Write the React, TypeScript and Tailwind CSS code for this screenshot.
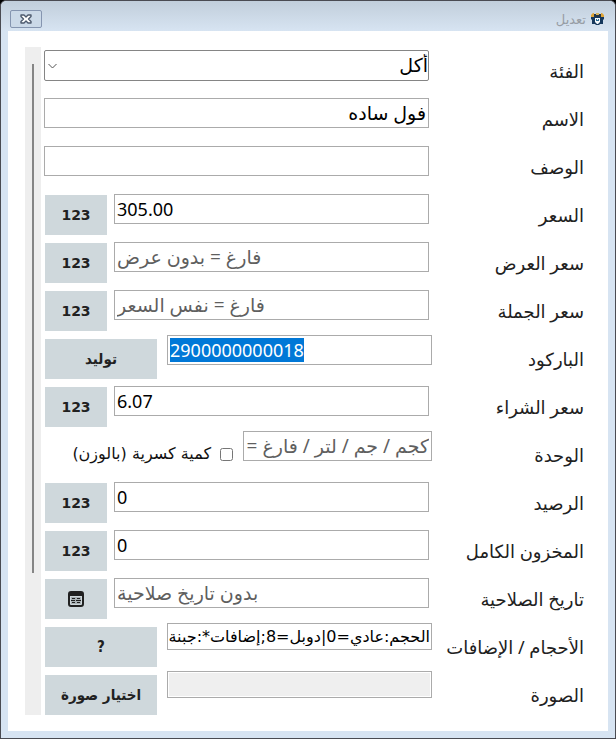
import { useEffect, useRef, useState } from "react";
import type { ReactNode } from "react";

const fieldClass =
  "block w-full min-w-0 flex-1 border border-[#ababab] bg-white px-[2px] leading-[23px] text-black outline-none placeholder:text-[#5f5f5f] placeholder:opacity-100 selection:bg-[#0078d7] selection:text-white";
const buttonClass =
  "mt-1 flex h-10 shrink-0 items-center justify-center bg-[#cfd8dc] font-bold text-[#212121] hover:bg-[#c2cdd2]";
const wideButtonClass = `${buttonClass} w-28 font-['DejaVu_Sans_Condensed','DejaVu_Sans',sans-serif] text-[15px]`;

interface RowProps {
  id: string;
  label: string;
  variant?: "plain" | "button" | "wide";
  children: ReactNode;
}

const rowClasses = {
  plain: "flex min-w-0 flex-1 items-start ps-[3px]",
  button: "flex min-w-0 flex-1 items-start gap-[7px] ps-[3px] pe-px",
  wide: "flex min-w-0 flex-1 items-start gap-[10px] pe-px",
};

function Row({ id, label, variant = "plain", children }: RowProps) {
  return (
    <div className="flex h-12 items-start">
      <label htmlFor={id} className="w-[152px] shrink-0 pt-3 text-lg leading-6 whitespace-nowrap text-[#212121]">
        {label}
      </label>
      <div className={rowClasses[variant]}>{children}</div>
    </div>
  );
}

interface NumberRowProps {
  id: string;
  label: string;
  value?: string;
  placeholder?: string;
}

function NumberRow({ id, label, value, placeholder }: NumberRowProps) {
  return (
    <Row id={id} label={label} variant="button">
      <input
        id={id}
        dir="ltr"
        defaultValue={value}
        placeholder={placeholder}
        className={`${fieldClass} mt-[3px] h-[30px] text-lg placeholder:text-[19px]`}
      />
      <button type="button" className={`${buttonClass} w-[62px] font-['DejaVu_Sans',sans-serif] text-sm`}>
        123
      </button>
    </Row>
  );
}

function AppIcon() {
  return (
    <svg width="13" height="12" viewBox="0 0 13 12">
      <path d="M1 1h11v3H1z" fill="#24364a" />
      <path d="M0 2 2 0h1v4H0zM10 0h1l2 2v2h-3z" fill="#e0a63a" />
      <path d="M5 0h3v2H5z" fill="#d9b45c" />
      <path d="M0 4h13v2l-1 1v4H9l-1 1H5l-1-1H1V7L0 6z" fill="#16385c" />
      <path d="M4 5h5v4l-2 2H6L4 9z" fill="#f4f8fa" />
      <path d="M5 6h3v2H5z" fill="#2b6b94" />
      <path d="M6 6h1v1H6z" fill="#f4f8fa" />
    </svg>
  );
}

function CloseIcon() {
  return (
    <svg width="12" height="10" viewBox="0 0 12 10">
      <path
        d="M1 1h3l2 2 2-2h3v1.500L8.500 5 11 7.500V9H8L6 7 4 9H1V7.500L3.500 5 1 2.500z"
        fill="#fff"
        stroke="#4d5a6e"
        strokeWidth="1.400"
        strokeLinejoin="round"
      />
    </svg>
  );
}

function CalendarIcon() {
  return (
    <svg width="16" height="16" viewBox="0 0 16 16">
      <rect x="1" y="1" width="14" height="14" rx="2" fill="#cfd8dc" stroke="#212121" strokeWidth="2" />
      <path d="M1 2h14v3H1z" fill="#212121" />
      <path d="M3 6h10v7H3z" fill="#a9b1b4" />
      <path d="M4 7h3v1H4zM9 7h3v1H9zM3 9h4v1H3zM8 9h5v1H8zM4 11h3v1H4zM9 11h3v1H9z" fill="#212121" />
    </svg>
  );
}

export default function App() {
  const barcodeRef = useRef<HTMLInputElement>(null);
  const [fractional, setFractional] = useState(false);

  useEffect(() => {
    barcodeRef.current?.focus();
    barcodeRef.current?.select();
  }, []);

  return (
    <div dir="rtl" className="min-h-screen bg-black font-['Noto_Sans','DejaVu_Sans',sans-serif]">
      <div className="flex min-h-screen flex-col rounded-t-md border border-[#4a4b52] bg-[#d7e4f2] px-[7px] pb-[7px]">
        {/* Title bar */}
        <header className="-mx-[7px] flex h-[30px] shrink-0 items-center justify-between rounded-t-md bg-linear-to-b from-[#c1cedb] to-[#d7e4f2] ps-[11px] pe-[9px] pt-[6px]">
          <div className="flex items-center gap-[5px]">
            <AppIcon />
            <h1 className="text-[13px] leading-4 text-[#979da5]">تعديل</h1>
          </div>
          <button
            type="button"
            aria-label="إغلاق"
            className="flex h-[18px] w-8 items-center justify-center rounded-[2px] border border-[#8595b0] bg-[#cbd9e8]"
          >
            <CloseIcon />
          </button>
        </header>

        <main className="flex flex-1 items-start bg-white ps-6 pe-[17px] pt-4 pb-3">
          <form className="min-w-0 flex-1" onSubmit={(e) => e.preventDefault()}>
            <Row id="category" label="الفئة">
              <div className="relative mt-[3px] min-w-0 flex-1">
                <select
                  id="category"
                  className="block h-[31px] w-full appearance-none rounded-[2px] border border-[#858585] bg-white pe-5 text-[19px] leading-[23px] text-black outline-none"
                >
                  <option>أكل</option>
                </select>
                <svg className="pointer-events-none absolute top-3 left-1" width="9" height="8" viewBox="0 0 9 8">
                  <path d="m.5 2 4 4 4-4" fill="none" stroke="#555" />
                </svg>
              </div>
            </Row>
            <Row id="name" label="الاسم">
              <input id="name" defaultValue="فول ساده" className={`${fieldClass} mt-[3px] h-[30px] text-[19px]`} />
            </Row>
            <Row id="description" label="الوصف">
              <input id="description" className={`${fieldClass} mt-[3px] h-[30px] text-[19px]`} />
            </Row>
            <NumberRow id="price" label="السعر" value="305.00" />
            <NumberRow id="offer" label="سعر العرض" placeholder="فارغ = بدون عرض" />
            <NumberRow id="wholesale" label="سعر الجملة" placeholder="فارغ = نفس السعر" />
            <Row id="barcode" label="الباركود" variant="wide">
              <input
                id="barcode"
                ref={barcodeRef}
                dir="ltr"
                defaultValue="2900000000018"
                className={`${fieldClass} h-[30px] text-lg`}
              />
              <button type="button" className={wideButtonClass}>
                توليد
              </button>
            </Row>
            <NumberRow id="cost" label="سعر الشراء" value="6.07" />
            <Row id="unit" label="الوحدة" variant="wide">
              <input id="unit" placeholder="كجم / جم / لتر / فارغ =" className={`${fieldClass} h-[30px] text-[19px]`} />
              <div className="flex w-[188px] shrink-0 items-center gap-[9px] pt-[13px]">
                <input
                  id="fractional"
                  type="checkbox"
                  checked={fractional}
                  onChange={(e) => setFractional(e.target.checked)}
                  className="size-[13px] shrink-0"
                />
                <label
                  htmlFor="fractional"
                  className="font-['DejaVu_Sans',sans-serif] text-base leading-5 whitespace-nowrap text-[#111]"
                >
                  كمية كسرية (بالوزن)
                </label>
              </div>
            </Row>
            <NumberRow id="stock" label="الرصيد" value="0" />
            <NumberRow id="full-stock" label="المخزون الكامل" value="0" />
            <Row id="expiry" label="تاريخ الصلاحية" variant="button">
              <input
                id="expiry"
                dir="ltr"
                placeholder="بدون تاريخ صلاحية"
                className={`${fieldClass} mt-[3px] h-[30px] text-[19px]`}
              />
              <button type="button" aria-label="تاريخ الصلاحية" className={`${buttonClass} w-[62px]`}>
                <CalendarIcon />
              </button>
            </Row>
            <Row id="options" label="الأحجام / الإضافات" variant="wide">
              <input
                id="options"
                defaultValue="الحجم:عادي=0|دوبل=8;إضافات*:جبنة"
                className="block h-[27px] w-full min-w-0 flex-1 border border-[#ababab] bg-white px-px font-['DejaVu_Sans',sans-serif] text-base leading-5 text-black outline-none"
              />
              <button type="button" className={wideButtonClass}>
                ?
              </button>
            </Row>
            <Row id="image" label="الصورة" variant="wide">
              <input
                id="image"
                readOnly
                className="block h-[27px] w-full min-w-0 flex-1 border border-[#ababab] bg-[#efefef] px-[2px] text-base outline-none ring-1 ring-white ring-inset"
              />
              <button type="button" className={wideButtonClass}>
                اختيار صورة
              </button>
            </Row>
          </form>

          {/* Scrollbar */}
          <div className="ms-[3px] mb-1 flex w-4 shrink-0 justify-center self-stretch bg-[#eeeeee] pt-[17px]">
            <div className="h-[509px] w-[2px] bg-[#858585]" />
          </div>
        </main>
      </div>
    </div>
  );
}
